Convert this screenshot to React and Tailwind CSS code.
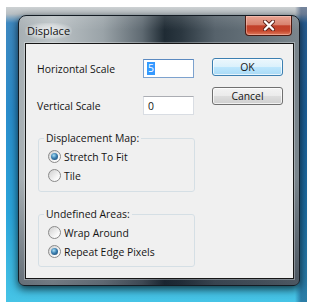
function Radio({ checked, label }) {
  return (
    <div className="flex items-center h-[19px]">
      <div className="w-[13px] h-[13px] rounded-full border border-[#8a8a8a] bg-[linear-gradient(135deg,#cfcfcf,#f8f8f8_70%,#ffffff)] flex items-center justify-center shrink-0">
        {checked && (
          <div className="w-[7px] h-[7px] rounded-full bg-[radial-gradient(circle_at_40%_35%,#a9e0f7_0%,#3b7fb0_45%,#163f66_100%)]" />
        )}
      </div>
      <span className="ml-[3px]">{label}</span>
    </div>
  );
}

function Group({ title, children, className }) {
  return (
    <fieldset className={"border border-[#d5dfe5] rounded-[3px] w-[157px] ml-[1px] " + className}>
      <legend className="ml-[5px] px-[2px] leading-[14px]">{title}</legend>
      {children}
    </fieldset>
  );
}

function Field({ children, focused }) {
  return (
    <div
      className={
        "w-[51px] h-[19px] bg-white border flex items-center pl-[3px] " +
        (focused
          ? "border-[#7da2ce] border-t-[#5b89c0]"
          : "border-[#d9dde3] border-t-[#abadb3]")
      }
    >
      {children}
    </div>
  );
}

export default function App() {
  return (
    <div className="w-[322px] h-[305px] bg-white pt-[7px] pl-[6px] font-['Open_Sans',sans-serif] text-[10.4px] leading-[14px] text-[#141414]">
      <div className="w-[301px] h-[295px] pl-[12px] pt-[8px] bg-[linear-gradient(90deg,rgba(0,0,0,0)_96%,rgba(10,40,90,0.45)_98%),linear-gradient(180deg,#cdd1d3_0px,#b8bfc3_7px,#3d88c0_16px,#2a8ccb_35%,#2aa4da_70%,#46c4e6_100%)]">
        <div className="w-[282px] h-[271px] rounded-t-[8px] rounded-b-[6px] border border-[#141c24] shadow-[0_3px_9px_rgba(0,0,0,0.75)] flex flex-col overflow-hidden bg-[linear-gradient(180deg,rgba(255,255,255,0.12)_0px,rgba(255,255,255,0)_14px,rgba(0,0,0,0)_60%,rgba(20,30,45,0.45)_100%),linear-gradient(90deg,#a7afb3_0%,#bcc3c6_12%,#9aa3a8_30%,#5f6a72_44%,#1f2b34_52%,#2b3740_58%,#56626b_70%,#66727a_85%,#7b868d_100%)]">
          <div className="h-[27px] flex items-start justify-between shrink-0">
            <div className="ml-[6px] mt-[7px] px-[2px] leading-[16px] rounded-full bg-[radial-gradient(ellipse_at_center,rgba(255,255,255,0.75)_0%,rgba(255,255,255,0.35)_55%,rgba(255,255,255,0)_80%)] text-[11px] text-[#111]">
              Displace
            </div>
            <div className="mr-[7px] w-[47px] h-[20px] rounded-b-[4px] border border-t-0 border-[#4a1a12] shadow-[inset_0_0_0_1px_rgba(255,210,200,0.45)] bg-[linear-gradient(180deg,#e9a594_0%,#d98470_45%,#c2412a_52%,#c5462c_78%,#e07b5e_100%)] flex items-center justify-center">
              <svg width="12" height="11" viewBox="0 0 12 11">
                <path d="M2 1.5 L10 9.5 M10 1.5 L2 9.5" stroke="#5a1e16" strokeWidth="4" strokeLinecap="round" />
                <path d="M2 1.5 L10 9.5 M10 1.5 L2 9.5" stroke="#ffffff" strokeWidth="2.4" strokeLinecap="round" />
              </svg>
            </div>
          </div>
          <div className="ml-[6px] w-[269px] h-[236px] bg-[#f0f0f0] border border-[#161616] shadow-[0_0_0_1px_rgba(255,255,255,0.3)] flex pl-[11px] pt-[15px]">
            <div className="w-[158px] flex flex-col">
              <div className="flex items-center h-[19px]">
                <span className="w-[106px]">Horizontal Scale</span>
                <Field focused>
                  <span className="bg-[#3399ff] text-white px-[1px] leading-[13px]">5</span>
                </Field>
              </div>
              <div className="flex items-center h-[19px] mt-[18px]">
                <span className="w-[106px]">Vertical Scale</span>
                <Field>
                  <span className="pl-[1px]">0</span>
                </Field>
              </div>
              <Group title="Displacement Map:" className="mt-[16px]">
                <div className="pl-[9px] pt-[2px] pb-[6px]">
                  <Radio checked label="Stretch To Fit" />
                  <Radio label="Tile" />
                </div>
              </Group>
              <Group title="Undefined Areas:" className="mt-[15px]">
                <div className="pl-[9px] pt-[2px] pb-[5px]">
                  <Radio label="Wrap Around" />
                  <Radio checked label="Repeat Edge Pixels" />
                </div>
              </Group>
            </div>
            <div className="ml-[17px] mt-[-1px] flex flex-col">
              <div className="w-[71px] h-[18px] rounded-[3px] border border-[#3c7fb1] shadow-[inset_0_0_0_1px_rgba(255,255,255,0.7)] bg-[linear-gradient(180deg,#ecf7fd_0%,#dbf1fc_48%,#bde6fd_52%,#a9daf5_100%)] flex items-center justify-center">
                OK
              </div>
              <div className="mt-[11px] w-[71px] h-[18px] rounded-[3px] border border-[#707070] shadow-[inset_0_0_0_1px_rgba(255,255,255,0.7)] bg-[linear-gradient(180deg,#f3f3f3_0%,#ebebeb_48%,#dddddd_52%,#cfcfcf_100%)] flex items-center justify-center">
                Cancel
              </div>
            </div>
          </div>
        </div>
      </div>
    </div>
  );
}
